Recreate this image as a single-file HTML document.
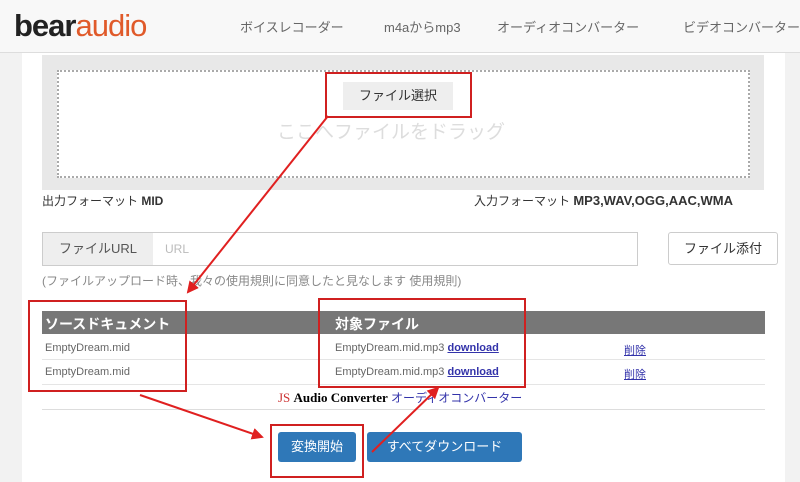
<!DOCTYPE html>
<html><head><meta charset="utf-8"><style>
body{margin:0;width:800px;height:482px;overflow:hidden;background:#f2f2f2;font-family:"Liberation Sans","Noto Sans CJK JP",sans-serif;position:relative}
.a{position:absolute}
.hd{left:0;top:0;width:800px;height:52px;background:#f8f8f8;border-bottom:1px solid #ddd}
.nav{top:17px;font-size:13px;color:#666}
.main{left:22px;top:53px;width:763px;height:429px;background:#fff}
.t{font-size:11px;color:#666}
.box{border:2px solid #d02020}
</style></head><body>
<div class="a hd"></div>
<div class="a" style="left:14px;top:8px;font-size:31px;letter-spacing:-1px;color:#222;font-weight:bold">bear<span style="color:#e05a2a;font-weight:normal">audio</span></div>
<div class="a nav" style="left:240px">ボイスレコーダー</div>
<div class="a nav" style="left:384px">m4aからmp3</div>
<div class="a nav" style="left:497px">オーディオコンバーター</div>
<div class="a nav" style="left:683px">ビデオコンバーター</div>
<div class="a main"></div>
<div class="a" style="left:42px;top:55px;width:722px;height:135px;background:#e8e8e8"></div>
<div class="a" style="left:57px;top:70px;width:689px;height:104px;background:#fff;border:2px dotted #aaa"></div>
<div class="a" style="left:277px;top:117px;font-size:19px;color:#ddd">ここへファイルをドラッグ</div>
<div class="a" style="left:343px;top:82px;width:110px;height:28px;background:#eee;font-size:13px;color:#333;text-align:center;line-height:28px">ファイル選択</div>
<div class="a" style="left:42px;top:192px;font-size:12px;color:#333">出力フォーマット <b>MID</b></div>
<div class="a" style="left:474px;top:192px;font-size:12px;color:#333">入力フォーマット <b style="font-size:13px">MP3,WAV,OGG,AAC,WMA</b></div>
<div class="a" style="left:42px;top:232px;width:594px;height:32px;border:1px solid #ccc;background:#fff"></div>
<div class="a" style="left:43px;top:233px;width:110px;height:32px;background:#eee;font-size:13px;color:#555;line-height:32px;text-align:center">ファイルURL</div>
<div class="a" style="left:165px;top:242px;font-size:12px;color:#bbb">URL</div>
<div class="a" style="left:668px;top:232px;width:108px;height:31px;border:1px solid #ccc;border-radius:3px;background:#fff;font-size:13px;color:#333;line-height:31px;text-align:center">ファイル添付</div>
<div class="a" style="left:42px;top:272px;font-size:12px;color:#888">(ファイルアップロード時、我々の使用規則に同意したと見なします 使用規則)</div>
<div class="a" style="left:42px;top:311px;width:723px;height:23px;background:#777"></div>
<div class="a" style="left:45px;top:314px;font-size:14px;font-weight:bold;color:#fff">ソースドキュメント</div>
<div class="a" style="left:335px;top:314px;font-size:14px;font-weight:bold;color:#fff">対象ファイル</div>
<div class="a" style="left:42px;top:359px;width:723px;height:1px;background:#e5e5e5"></div>
<div class="a" style="left:42px;top:384px;width:723px;height:1px;background:#e5e5e5"></div>
<div class="a t" style="left:45px;top:342px">EmptyDream.mid</div>
<div class="a t" style="left:45px;top:366px">EmptyDream.mid</div>
<div class="a t" style="left:335px;top:342px">EmptyDream.mid.mp3 <u style="color:#33a;font-weight:bold">download</u></div>
<div class="a t" style="left:335px;top:366px">EmptyDream.mid.mp3 <u style="color:#33a;font-weight:bold">download</u></div>
<div class="a t" style="left:624px;top:342px;color:#33a"><u>削除</u></div>
<div class="a t" style="left:624px;top:366px;color:#33a"><u>削除</u></div>
<div class="a" style="left:278px;top:389px;font-size:13px;font-family:'Liberation Serif',serif"><span style="color:#c33">JS</span> <b>Audio Converter</b> <span style="color:#33a;font-size:12px;font-family:'Liberation Sans','Noto Sans CJK JP',sans-serif">オーディオコンバーター</span></div>
<div class="a" style="left:42px;top:409px;width:723px;height:1px;background:#ddd"></div>
<div class="a" style="left:278px;top:432px;width:78px;height:30px;background:#2f78b8;border-radius:3px;color:#fff;font-size:13px;line-height:30px;text-align:center">変換開始</div>
<div class="a" style="left:367px;top:432px;width:155px;height:30px;background:#2f78b8;border-radius:3px;color:#fff;font-size:13px;line-height:30px;text-align:center">すべてダウンロード</div>
<div class="a box" style="left:325px;top:72px;width:143px;height:42px"></div>
<div class="a box" style="left:28px;top:300px;width:155px;height:88px"></div>
<div class="a box" style="left:318px;top:298px;width:204px;height:86px"></div>
<div class="a box" style="left:270px;top:424px;width:90px;height:50px"></div>
<svg class="a" style="left:0;top:0" width="800" height="482">
<defs><marker id="m" markerWidth="6" markerHeight="6" refX="5" refY="3" orient="auto"><path d="M0,0L6,3L0,6Z" fill="#e02020"/></marker></defs>
<g stroke="#e02020" stroke-width="2" fill="none" marker-end="url(#m)">
<line x1="328" y1="116" x2="188" y2="292"/>
<line x1="140" y1="395" x2="262" y2="437"/>
<line x1="372" y1="452" x2="438" y2="388"/>
</g></svg>
</body></html>
